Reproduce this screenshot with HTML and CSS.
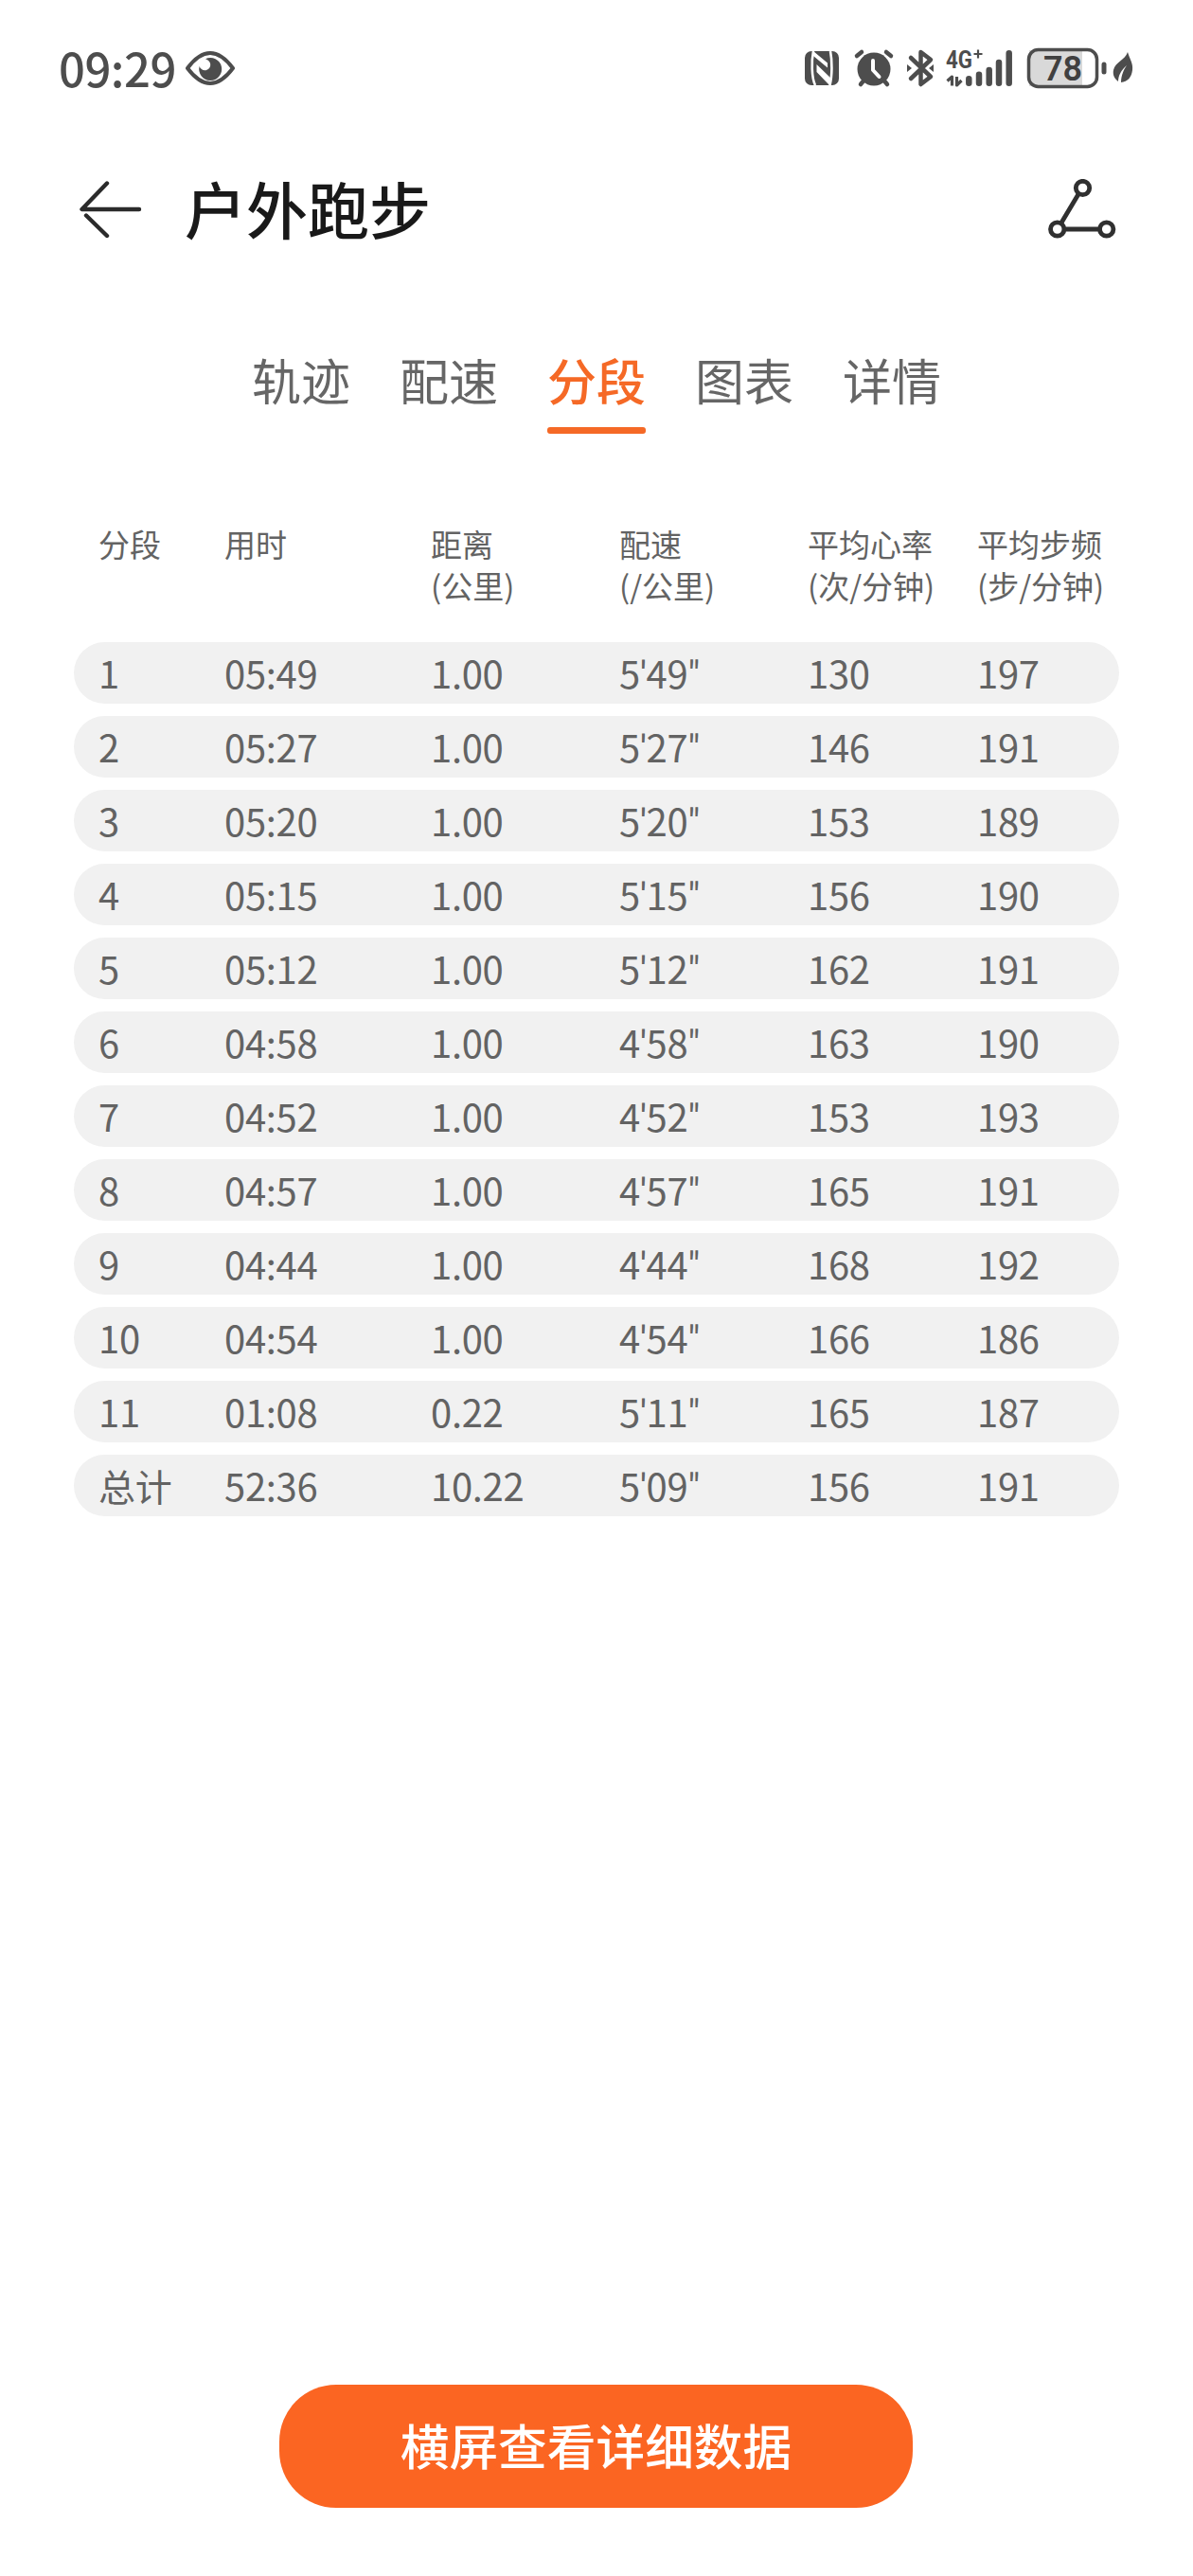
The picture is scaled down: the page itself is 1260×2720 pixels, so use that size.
FILE: index.html
```html
<!DOCTYPE html>
<html lang="zh-CN">
<head>
    <meta charset="UTF-8">
    <meta name="viewport" content="width=device-width, initial-scale=1.0">
    <title>户外跑步</title>
    <link rel="stylesheet" href="styles.css">
</head>
<body>
    <div class="status-bar">
        <div class="status-left">
            <span class="clock">09:29</span>
            <svg class="eye" width="52" height="36" viewBox="0 0 52 36">
                <path d="M2 18 Q26 -14 50 18 Q26 50 2 18 Z" fill="none" stroke="#4d4d4d" stroke-width="4" stroke-linejoin="round"/>
                <path d="M21 8.2 A12 12 0 1 1 14.6 16 C16 20 21 22 24.5 18.5 C28 15 26 9.5 21 8.2 Z" fill="#4d4d4d"/>
            </svg>
        </div>
        <!-- nfc, alarm, bluetooth, signal, battery, leaf -->
        <svg class="status-icons" width="350" height="44" viewBox="0 0 350 44">
            <rect x="0" y="4" width="36" height="36" rx="7" fill="#4d4d4d"/>
            <path d="M9 4 C7 14 7 32 11 40 M27 4 C29 14 29 30 26.500 40" fill="none" stroke="#fff" stroke-width="2.600"/>
            <path d="M9 4 L24 16.500 V21.500 L9 9 Z M12.500 18 L28 33 V40 H26 L12.500 26 Z" fill="#fff"/>

            <g fill="none" stroke="#4d4d4d" stroke-width="4.500" stroke-linecap="round">
                <path d="M55 9 L60 5 M86 5 L91 9 M59 39 L64 33 M87 39 L82 33"/>
            </g>
            <circle cx="73" cy="23" r="17.500" fill="#4d4d4d"/>
            <path d="M72 14 V24 L78.500 31" fill="none" stroke="#fff" stroke-width="4" stroke-linecap="round" stroke-linejoin="round"/>

            <path d="M112 11 L133 31 L122.500 39 V5 L133 13 L112 33" fill="none" stroke="#4d4d4d" stroke-width="4.500" stroke-linecap="round" stroke-linejoin="round"/>
            <path d="M108 18 L113 22 L108 26 Z M136 18 L131 22 L136 26 Z" fill="#4d4d4d"/>

            <text class="net" x="149" y="21.500" textLength="28" lengthAdjust="spacingAndGlyphs">4G</text>
            <path d="M178.500 7 H187.500 M183 2.500 V11.500" stroke="#4d4d4d" stroke-width="2.200"/>
            <path d="M155.500 40.500 V31 L150.500 35.500 M160.500 31 V40 L165.500 35" fill="none" stroke="#4d4d4d" stroke-width="3.200" stroke-linejoin="round"/>
            <g stroke="#4d4d4d" stroke-width="6.500" stroke-linecap="round">
                <path d="M173.300 33.300 V37.800 M184 28.800 V37.800 M194.700 24 V37.800 M205 16 V37.800 M215.700 6.300 V37.800"/>
            </g>

            <rect x="237" y="3" width="56" height="38" fill="#d9d9d9"/>
            <rect x="236.500" y="2.500" width="72" height="39" rx="10" fill="none" stroke="#4d4d4d" stroke-width="3.500"/>
            <text class="level" x="272.500" y="35" text-anchor="middle">78</text>
            <rect x="313.500" y="15.500" width="5" height="13" rx="2.500" fill="#4d4d4d"/>
            <path d="M341 5 C343 12 347 17 346 24 C345 32 341 36 334 37 C334 30 337 23 340 19 C334 24 331 30 331 36 C327 33 325 29 326 24 C328 15 338 14 341 5 Z" fill="#4d4d4d"/>
        </svg>
    </div>

    <div class="header">
        <svg class="back" width="68" height="62" viewBox="0 0 68 62">
            <path d="M31 3.500 L4.500 31 H65 M9 37.500 L31 59" fill="none" stroke="#2b2b2b" stroke-width="4.400" stroke-linecap="round" stroke-linejoin="round"/>
        </svg>
        <h1>户外跑步</h1>
        <svg class="route" width="74" height="64" viewBox="0 0 74 64">
            <g fill="none" stroke="#303030" stroke-width="4.800">
                <path d="M14.500 47 L33 16 M18 53 H55"/>
                <circle cx="37.500" cy="9.500" r="7.200"/>
                <circle cx="10.700" cy="53" r="7.200"/>
                <circle cx="62.700" cy="53" r="7.200"/>
            </g>
        </svg>
    </div>

    <div class="tabs">
        <div class="tab">轨迹</div>
        <div class="tab">配速</div>
        <div class="tab active">分段</div>
        <div class="tab">图表</div>
        <div class="tab">详情</div>
    </div>

    <div class="table">
        <div class="table-head">
            <span>分段</span><span>用时</span><span>距离<br>(公里)</span><span>配速<br>(/公里)</span><span>平均心率<br>(次/分钟)</span><span>平均步频<br>(步/分钟)</span>
        </div>
        <div class="row"><span>1</span><span>05:49</span><span>1.00</span><span>5<i>'</i>49<i>"</i></span><span>130</span><span>197</span></div>
        <div class="row"><span>2</span><span>05:27</span><span>1.00</span><span>5<i>'</i>27<i>"</i></span><span>146</span><span>191</span></div>
        <div class="row"><span>3</span><span>05:20</span><span>1.00</span><span>5<i>'</i>20<i>"</i></span><span>153</span><span>189</span></div>
        <div class="row"><span>4</span><span>05:15</span><span>1.00</span><span>5<i>'</i>15<i>"</i></span><span>156</span><span>190</span></div>
        <div class="row"><span>5</span><span>05:12</span><span>1.00</span><span>5<i>'</i>12<i>"</i></span><span>162</span><span>191</span></div>
        <div class="row"><span>6</span><span>04:58</span><span>1.00</span><span>4<i>'</i>58<i>"</i></span><span>163</span><span>190</span></div>
        <div class="row"><span>7</span><span>04:52</span><span>1.00</span><span>4<i>'</i>52<i>"</i></span><span>153</span><span>193</span></div>
        <div class="row"><span>8</span><span>04:57</span><span>1.00</span><span>4<i>'</i>57<i>"</i></span><span>165</span><span>191</span></div>
        <div class="row"><span>9</span><span>04:44</span><span>1.00</span><span>4<i>'</i>44<i>"</i></span><span>168</span><span>192</span></div>
        <div class="row"><span>10</span><span>04:54</span><span>1.00</span><span>4<i>'</i>54<i>"</i></span><span>166</span><span>186</span></div>
        <div class="row"><span>11</span><span>01:08</span><span>0.22</span><span>5<i>'</i>11<i>"</i></span><span>165</span><span>187</span></div>
        <div class="row"><span class="total">总计</span><span>52:36</span><span>10.22</span><span>5<i>'</i>09<i>"</i></span><span>156</span><span>191</span></div>
    </div>

    <button class="landscape-btn">横屏查看详细数据</button>
</body>
</html>
```

FILE: styles.css
```css
* {
    box-sizing: border-box;
}

body {
    margin: 0;
    height: 2720px;
    display: flex;
    flex-direction: column;
    background-color: #fff;
    color: #636363;
    font-family: "Noto Sans CJK SC", "Noto Sans", sans-serif;
}

svg {
    display: block;
    flex: none;
}

/* status bar */
.status-bar {
    height: 144px;
    padding: 0 60px 0 62px;
    display: flex;
    align-items: center;
    justify-content: space-between;
}

.status-left {
    display: flex;
    align-items: center;
    gap: 10px;
}

.clock {
    width: 124px;
    padding-bottom: 3px;
    font-size: 49px;
    font-weight: 500;
    line-height: 60px;
    letter-spacing: -0.5px;
    white-space: nowrap;
    color: #4d4d4d;
}

.net,
.level {
    font-family: Roboto, "Liberation Sans", sans-serif;
}

.net {
    font-size: 25px;
    font-weight: 700;
    fill: #4d4d4d;
}

.level {
    font-size: 36px;
    font-weight: 600;
    fill: #404040;
}

/* title */
.header {
    height: 154px;
    padding: 0 80px 0 82px;
    display: flex;
    align-items: center;
}

h1 {
    flex: 1;
    margin: 0 0 0 45px;
    padding-bottom: 5px;
    font-size: 65px;
    font-weight: 500;
    line-height: 90px;
    color: #191919;
}

/* tabs */
.tabs {
    display: flex;
    justify-content: center;
    gap: 52px;
    margin-top: 64px;
}

.tab {
    height: 96px;
    font-size: 52px;
    line-height: 78px;
    color: #666;
}

.tab.active {
    color: #f56926;
    font-weight: 500;
}

.tab.active::after {
    content: "";
    display: block;
    height: 7px;
    margin-top: 11px;
    border-radius: 3px;
    background-color: #f56926;
}

/* segments table */
.table {
    margin: 94px 78px 0;
    display: flex;
    flex-direction: column;
    gap: 13px;
}

.table-head,
.row {
    display: grid;
    grid-template-columns: 133px 218px 199px 199px 179px 1fr;
    padding-left: 26px;
}

.table-head {
    height: 113px;
    font-size: 33px;
    line-height: 44px;
    white-space: nowrap;
}

.row {
    height: 65px;
    align-items: center;
    background-color: #f1f1f1;
    border-radius: 33px;
    font-size: 40px;
    line-height: 65px;
    letter-spacing: -0.3px;
}

/* minute and second marks */
.row i {
    font-family: Roboto, "Liberation Sans", sans-serif;
    font-style: normal;
    line-height: 1;
}

.total {
    font-size: 39px;
}

.landscape-btn {
    width: 669px;
    height: 130px;
    margin: auto 296px 72px 295px;
    padding: 0 0 6px;
    border: none;
    border-radius: 60px;
    background-color: #fb6522;
    color: #fff;
    font-family: inherit;
    font-size: 51.7px;
    font-weight: 500;
}
```
